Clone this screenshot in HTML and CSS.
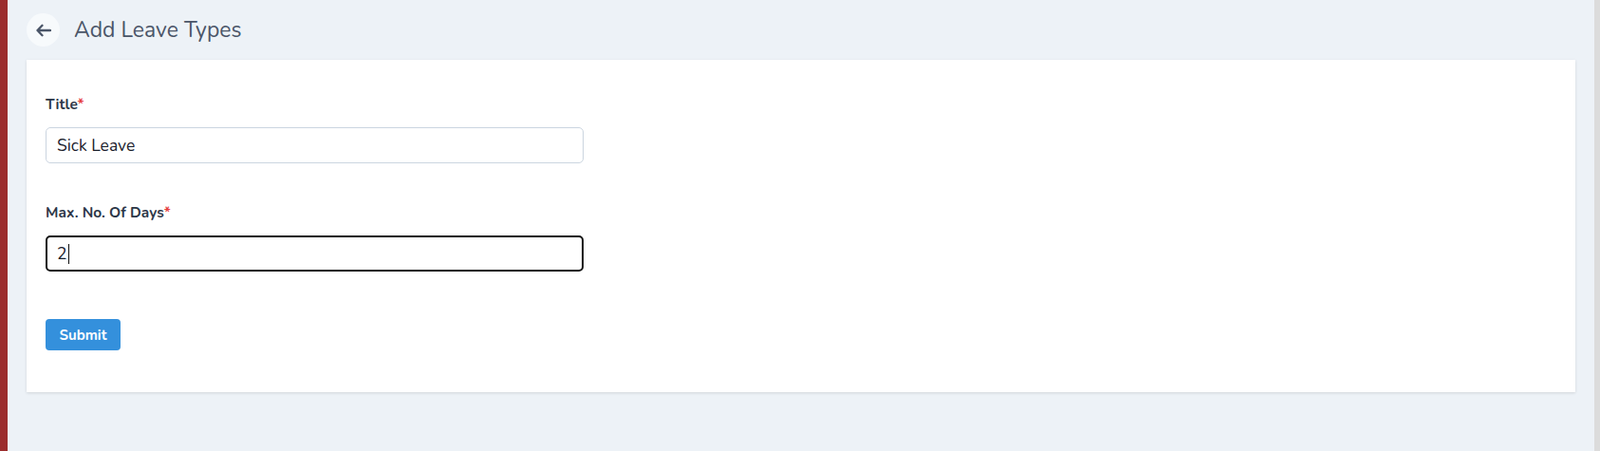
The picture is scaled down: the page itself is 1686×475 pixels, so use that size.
FILE: index.html
```html
<!DOCTYPE html>
<html>
<head>
<meta charset="utf-8">
<link rel="stylesheet" href="styles.css">
</head>
<body>
<div class="app">
  <div class="side-strip"></div>
  <main class="main">
    <header class="page-header">
      <button class="back-btn" aria-label="Back">
        <svg width="16" height="16" viewBox="0 0 16 16" fill="none" stroke="#4a5568" stroke-width="2.3" stroke-linecap="round" stroke-linejoin="round"><path d="M15 8H1.5M6.5 2.8L1.5 8l5 5.2"/></svg>
      </button>
      <h1 class="page-title">Add Leave Types</h1>
    </header>
    <section class="card">
      <form class="form">
        <div class="field">
          <label class="label">Title<span class="req">*</span></label>
          <input class="input" type="text" value="Sick Leave">
        </div>
        <div class="field">
          <label class="label">Max. No. Of Days<span class="req">*</span></label>
          <div class="input input-focus"><span>2</span><span class="caret"></span></div>
        </div>
        <div class="actions">
          <button type="button" class="submit">Submit</button>
        </div>
      </form>
    </section>
  </main>
  <div class="scroll-strip"></div>
</div>
</body>
</html>
```

FILE: styles.css
```css
* { box-sizing: border-box; }
html, body { margin: 0; padding: 0; }
body {
  font-family: "Nunito", "Lato", "Noto Sans", sans-serif;
  background: #edf2f7;
  color: #2d3748;
}
.app {
  display: flex;
  min-height: 475px;
}
.side-strip {
  width: 8px;
  flex: 0 0 8px;
  background: #9b2c2c;
}
.scroll-strip {
  width: 6px;
  flex: 0 0 6px;
  background: #dcdcdc;
}
.main {
  flex: 1;
  padding: 14px 20px 0 20px;
}
.page-header {
  display: flex;
  align-items: center;
  height: 35px;
}
.back-btn {
  width: 35px;
  height: 35px;
  border-radius: 50%;
  border: none;
  background: #f7fafc;
  display: flex;
  align-items: center;
  justify-content: center;
  padding: 0;
  margin: 0;
}
.page-title {
  margin: 0 0 0 15px;
  font-size: 23px;
  font-weight: 400;
  line-height: 30px;
  color: #4a5568;
}
.card {
  margin-top: 14px;
  background: #fff;
  box-shadow: 0 1px 3px rgba(0,0,0,0.12);
  padding: 37px 20px 0 20px;
  height: 350px;
}
.form {
  width: 567px;
}
.field {
  margin-bottom: 42px;
}
.field:last-of-type {
  margin-bottom: 0;
}
.label {
  display: block;
  font-size: 15.5px;
  font-weight: 700;
  color: #2d3748;
  line-height: 20px;
  margin-bottom: 14px;
}
.req { color: #e53e3e; }
.input {
  display: flex;
  align-items: center;
  width: 567px;
  height: 38px;
  border: 1px solid #cbd5e0;
  border-radius: 5px;
  padding: 0 11px;
  font-family: inherit;
  font-size: 17.5px;
  color: #1a202c;
  background: #fff;
  outline: none;
}
.input-focus {
  border: 2px solid #111;
  padding: 0 10px;
}
.caret {
  display: inline-block;
  width: 1px;
  height: 21px;
  background: #111;
  margin-left: 1px;
}
.actions {
  margin-top: 50px;
}
.submit {
  width: 79px;
  height: 33px;
  border: none;
  border-radius: 4px;
  background: #3490dc;
  color: #fff;
  font-family: inherit;
  font-weight: 700;
  font-size: 15px;
  padding: 0;
}
```
